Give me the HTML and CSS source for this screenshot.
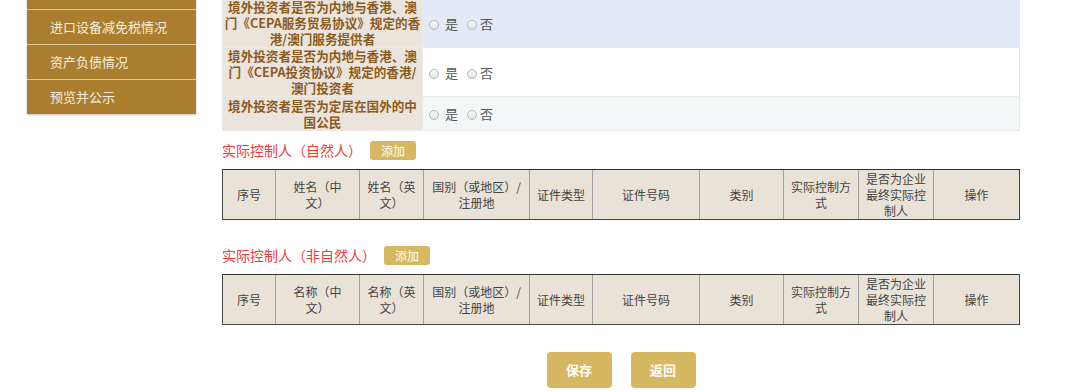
FILE: index.html
```html
<!DOCTYPE html>
<html lang="zh-CN">
<head>
<meta charset="utf-8">
<title>外商投资信息报告</title>
<link rel="stylesheet" href="styles.css">
</head>
<body>
<div class="page">
  <aside class="sidebar">
    <div class="nav-item">投资者信息</div>
    <div class="nav-item">进口设备减免税情况</div>
    <div class="nav-item">资产负债情况</div>
    <div class="nav-item">预览并公示</div>
  </aside>
  <main class="main">
    <table class="info">
      <colgroup><col class="lab"><col class="val"></colgroup>
      <tr class="r1">
        <th>境外投资者是否为内地与香港、澳<br>门《CEPA服务贸易协议》规定的香<br>港/澳门服务提供者</th>
        <td><span class="radio"></span><span class="opt">是</span><span class="radio"></span><span class="opt">否</span></td>
      </tr>
      <tr class="r2">
        <th>境外投资者是否为内地与香港、澳<br>门《CEPA投资协议》规定的香港/<br>澳门投资者</th>
        <td><span class="radio"></span><span class="opt">是</span><span class="radio"></span><span class="opt">否</span></td>
      </tr>
      <tr class="r3">
        <th>境外投资者是否为定居在国外的中<br>国公民</th>
        <td><span class="radio"></span><span class="opt">是</span><span class="radio"></span><span class="opt">否</span></td>
      </tr>
    </table>

    <div class="section-title first">
      <span class="title-text">实际控制人（自然人）</span>
      <span class="btn-add">添加</span>
    </div>
    <table class="grid">
      <colgroup>
        <col class="c1"><col class="c2"><col class="c3"><col class="c4"><col class="c5"><col class="c6"><col class="c7"><col class="c8"><col class="c9"><col class="c10">
      </colgroup>
      <tr>
        <th>序号</th><th>姓名（中<br>文）</th><th>姓名（英<br>文）</th><th>国别（或地区）/<br>注册地</th><th>证件类型</th><th>证件号码</th><th>类别</th><th>实际控制方<br>式</th><th>是否为企业<br>最终实际控<br>制人</th><th>操作</th>
      </tr>
    </table>

    <div class="section-title second">
      <span class="title-text">实际控制人（非自然人）</span>
      <span class="btn-add">添加</span>
    </div>
    <table class="grid">
      <colgroup>
        <col class="c1"><col class="c2"><col class="c3"><col class="c4"><col class="c5"><col class="c6"><col class="c7"><col class="c8"><col class="c9"><col class="c10">
      </colgroup>
      <tr>
        <th>序号</th><th>名称（中<br>文）</th><th>名称（英<br>文）</th><th>国别（或地区）/<br>注册地</th><th>证件类型</th><th>证件号码</th><th>类别</th><th>实际控制方<br>式</th><th>是否为企业<br>最终实际控<br>制人</th><th>操作</th>
      </tr>
    </table>

    <div class="actions">
      <span class="btn">保存</span>
      <span class="btn">返回</span>
    </div>
  </main>
</div>
</body>
</html>
```

FILE: styles.css
```css
html, body {
  margin: 0;
  padding: 0;
  background: #ffffff;
}
body {
  font-family: "Microsoft YaHei", "Noto Sans CJK SC", "Noto Sans", sans-serif;
  overflow: hidden;
  text-spacing-trim: space-all;
}
.page {
  display: flex;
  align-items: flex-start;
  width: 1080px;
  height: 392px;
  overflow: hidden;
}
.sidebar {
  margin-left: 27px;
  margin-top: -25px;
  width: 169px;
  flex: none;
  background: #aa7e2e;
  box-shadow: 0 1px 2px rgba(0,0,0,0.25);
}
.nav-item {
  height: 34px;
  line-height: 34px;
  padding-left: 23px;
  font-size: 13px;
  color: #f6eedf;
  border-bottom: 1px solid #d9c79d;
}
.nav-item:last-child {
  border-bottom: none;
}
.main {
  margin-left: 26px;
  width: 798px;
  flex: none;
  margin-top: -2px;
}
.info {
  width: 798px;
  border-collapse: collapse;
  table-layout: fixed;
}
.info col.lab { width: 200px; }
.info th {
  padding: 0 1px;
  background: #ebe4dc;
  color: #8b5b1c;
  font-size: 12.6px;
  font-weight: bold;
  line-height: 16px;
  text-align: center;
  border: 1px solid #ece9e6;
  white-space: nowrap;
  overflow: hidden;
}
.info td {
  padding: 0 0 0 6px;
  border: 1px solid #ece9e6;
  font-size: 13px;
  color: #555;
  vertical-align: middle;
}
.info .r1 th, .info .r1 td { height: 47px; }
.info .r2 th, .info .r2 td { height: 48px; }
.info .r3 th, .info .r3 td { height: 33px; }
.info .r1 td { background: #e4e9f6; }
.info .r2 td { background: #ffffff; }
.info .r3 td { background: #f4f7f7; }
.radio {
  display: inline-block;
  width: 8px;
  height: 8px;
  border-radius: 50%;
  border: 1px solid #b5b5b5;
  background: linear-gradient(#fafafa, #e3e3e3);
  vertical-align: -1px;
  margin-right: 6px;
}
.opt {
  display: inline-block;
  margin-right: 9px;
  color: #555;
  font-size: 13px;
}
.opt + .radio + .opt { margin-left: -3px; }
.section-title {
  display: flex;
  align-items: center;
  height: 19px;
}
.section-title.first { margin-top: 10px; }
.section-title.second { margin-top: 26px; }
.title-text {
  font-size: 14px;
  color: #f23a3a;
  line-height: 19px;
}
.btn-add {
  margin-left: 8px;
  width: 46px;
  height: 19px;
  line-height: 19px;
  text-align: center;
  background: #d6b862;
  border-radius: 3px;
  color: #fff;
  font-size: 12px;
}
.grid {
  margin-top: 9px;
  width: 798px;
  border-collapse: separate;
  border-spacing: 0;
  table-layout: fixed;
  border: 1px solid #444;
  border-top-color: #333;
}
.grid th {
  background: #e9e3d7;
  color: #444;
  font-size: 12px;
  font-weight: normal;
  line-height: 16px;
  height: 49px;
  padding: 0 2px;
  text-align: center;
  vertical-align: middle;
  border-left: 1px solid #a0a0a0;
}
.grid th:first-child {
  border-left: none;
}
.grid col.c1 { width: 52px; }
.grid col.c2 { width: 84px; }
.grid col.c3 { width: 64px; }
.grid col.c4 { width: 106px; }
.grid col.c5 { width: 63px; }
.grid col.c6 { width: 107px; }
.grid col.c7 { width: 84px; }
.grid col.c8 { width: 75px; }
.grid col.c9 { width: 75px; }
.grid col.c10 { width: 86px; }
.actions {
  margin-top: 27px;
  display: flex;
  justify-content: center;
  gap: 19px;
}
.btn {
  width: 65px;
  height: 36px;
  line-height: 36px;
  text-align: center;
  background: #d6b862;
  border-radius: 4px;
  color: #fff;
  font-size: 13px;
  font-weight: bold;
}
```
